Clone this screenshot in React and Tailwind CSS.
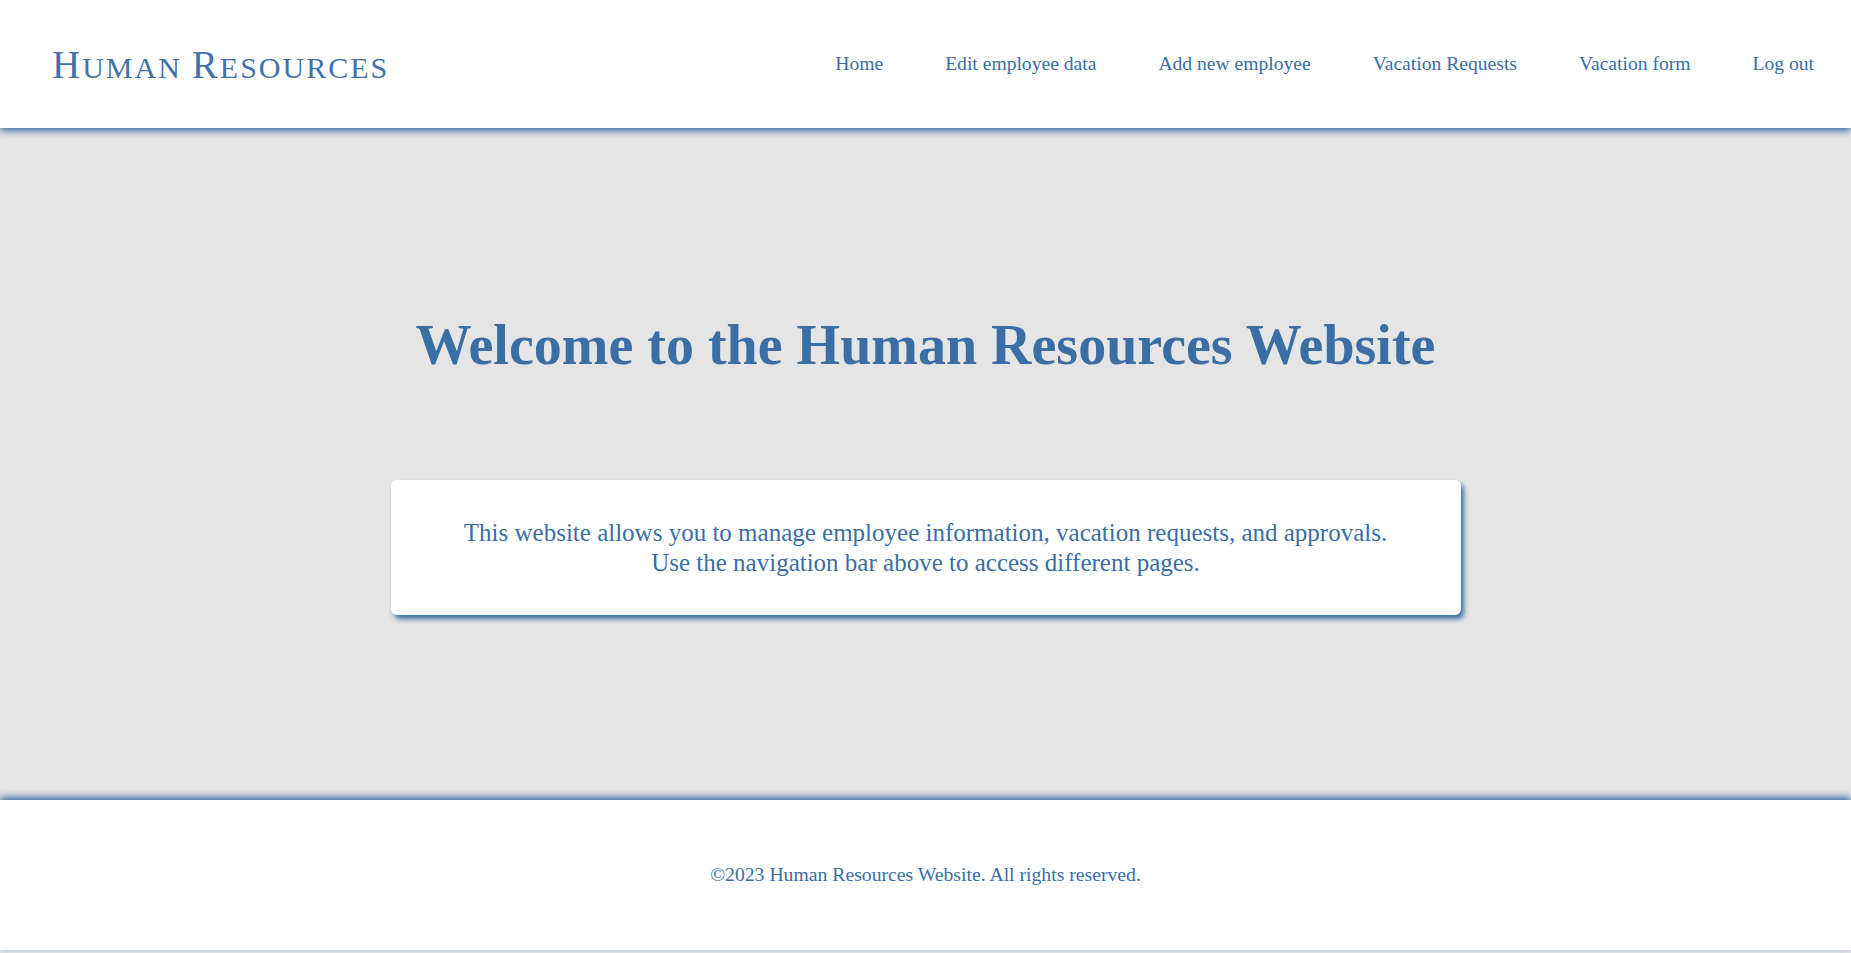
import React from "react";

const links = ["Home", "Edit employee data", "Add new employee", "Vacation Requests", "Vacation form", "Log out"];

export default function App() {
    return (
        <div className="min-h-screen bg-[#e5e5e5] font-['Liberation_Serif','Times_New_Roman',serif] text-[#3a6ea5]">
            {/* Header */}
            <header className="relative z-10 h-[128px] bg-white flex items-center justify-between pl-[52px] pr-[37px] shadow-[0_3px_7px_#3a6ea5]">
                <div className="text-[30px] leading-none tracking-[2px] text-[#4172a9] whitespace-nowrap">
                    <span className="text-[39px]">H</span>UMAN<span className="inline-block w-[10px]"></span>
                    <span className="text-[39px]">R</span>ESOURCES
                </div>
                <nav className="flex items-center gap-[62px] text-[19.6px]">
                    {links.map((l) => (
                        <a key={l} href="#" className="whitespace-nowrap">{l}</a>
                    ))}
                </nav>
            </header>

            {/* Main */}
            <main className="h-[672px] flex flex-col items-center justify-center gap-[103px]">
                <h1 className="text-[56px] leading-[64px] font-bold whitespace-nowrap">
                    Welcome to the Human Resources Website
                </h1>
                <div className="w-[1070px] bg-white rounded-md py-[38px] text-center text-[25px] leading-[29.4px] shadow-[3px_4px_5px_#3a6ea5]">
                    <p>This website allows you to manage employee information, vacation requests, and approvals.</p>
                    <p>Use the navigation bar above to access different pages.</p>
                </div>
            </main>

            {/* Footer */}
            <footer className="relative h-[150px] bg-white flex items-center justify-center shadow-[0_-3px_7px_#3a6ea5]">
                <p className="text-[19.7px]">©2023 Human Resources Website. All rights reserved.</p>
            </footer>
            <div className="h-[40px]"></div>
        </div>
    );
}
